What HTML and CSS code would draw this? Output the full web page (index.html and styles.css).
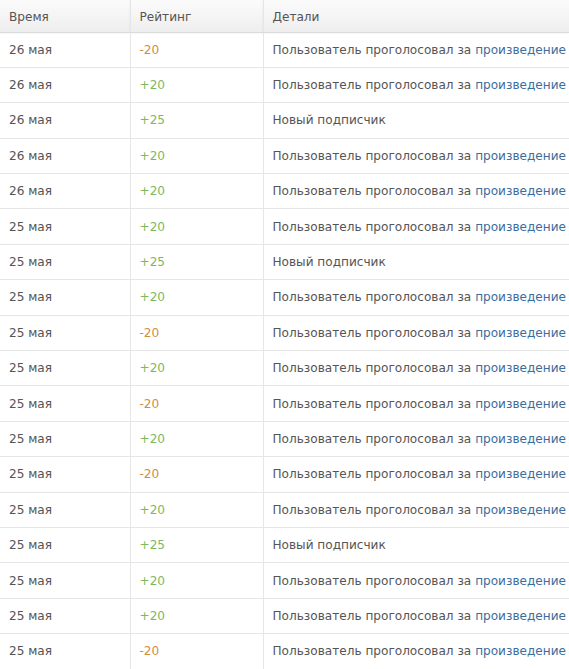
FILE: index.html
```html
<!DOCTYPE html>
<html lang="ru">
<head>
  <meta charset="UTF-8">
  <title>Рейтинг</title>
  <link rel="stylesheet" href="styles.css">
</head>
<body>
  <table class="rating-log">
    <thead>
      <tr>
        <th class="col-time">Время</th>
        <th class="col-rating">Рейтинг</th>
        <th class="col-details">Детали</th>
      </tr>
    </thead>
    <tbody>
      <tr><td>26 мая</td><td class="minus">-20</td><td>Пользователь проголосовал за <a href="#">произведение</a></td></tr>
      <tr><td>26 мая</td><td class="plus">+20</td><td>Пользователь проголосовал за <a href="#">произведение</a></td></tr>
      <tr><td>26 мая</td><td class="plus">+25</td><td>Новый подписчик</td></tr>
      <tr><td>26 мая</td><td class="plus">+20</td><td>Пользователь проголосовал за <a href="#">произведение</a></td></tr>
      <tr><td>26 мая</td><td class="plus">+20</td><td>Пользователь проголосовал за <a href="#">произведение</a></td></tr>
      <tr><td>25 мая</td><td class="plus">+20</td><td>Пользователь проголосовал за <a href="#">произведение</a></td></tr>
      <tr><td>25 мая</td><td class="plus">+25</td><td>Новый подписчик</td></tr>
      <tr><td>25 мая</td><td class="plus">+20</td><td>Пользователь проголосовал за <a href="#">произведение</a></td></tr>
      <tr><td>25 мая</td><td class="minus">-20</td><td>Пользователь проголосовал за <a href="#">произведение</a></td></tr>
      <tr><td>25 мая</td><td class="plus">+20</td><td>Пользователь проголосовал за <a href="#">произведение</a></td></tr>
      <tr><td>25 мая</td><td class="minus">-20</td><td>Пользователь проголосовал за <a href="#">произведение</a></td></tr>
      <tr><td>25 мая</td><td class="plus">+20</td><td>Пользователь проголосовал за <a href="#">произведение</a></td></tr>
      <tr><td>25 мая</td><td class="minus">-20</td><td>Пользователь проголосовал за <a href="#">произведение</a></td></tr>
      <tr><td>25 мая</td><td class="plus">+20</td><td>Пользователь проголосовал за <a href="#">произведение</a></td></tr>
      <tr><td>25 мая</td><td class="plus">+25</td><td>Новый подписчик</td></tr>
      <tr><td>25 мая</td><td class="plus">+20</td><td>Пользователь проголосовал за <a href="#">произведение</a></td></tr>
      <tr><td>25 мая</td><td class="plus">+20</td><td>Пользователь проголосовал за <a href="#">произведение</a></td></tr>
      <tr><td>25 мая</td><td class="minus">-20</td><td>Пользователь проголосовал за <a href="#">произведение</a></td></tr>
    </tbody>
  </table>
</body>
</html>
```

FILE: styles.css
```css
body {
  margin: 0;
  background: #fff;
  font-family: "DejaVu Sans", Verdana, sans-serif;
  font-size: 12.1px;
  color: #555;
  overflow: hidden;
}
.rating-log {
  border-collapse: collapse;
  width: 100%;
  table-layout: fixed;
}
.rating-log th,
.rating-log td {
  box-sizing: border-box;
}
.col-time { width: 130px; }
.col-rating { width: 133px; }
.rating-log th {
  height: 32px;
  padding: 2px 9px 0;
  text-align: left;
  font-weight: normal;
  color: #555;
  background: linear-gradient(#fbfbfb, #eeeeee);
  border-bottom: 1px solid #dadada;
  box-shadow: 0 1px 2px rgba(0, 0, 0, 0.08);
}
.rating-log th + th,
.rating-log td + td {
  border-left: 1px solid #e6e6e6;
}
.rating-log td {
  height: 35.4px;
  padding: 0 0 0 9px;
  border-bottom: 1px solid #e6e6e6;
  white-space: nowrap;
}
.rating-log a {
  color: #3d6d9c;
  text-decoration: none;
}
.minus { color: #d08c44; }
.plus { color: #7cb860; }
```
